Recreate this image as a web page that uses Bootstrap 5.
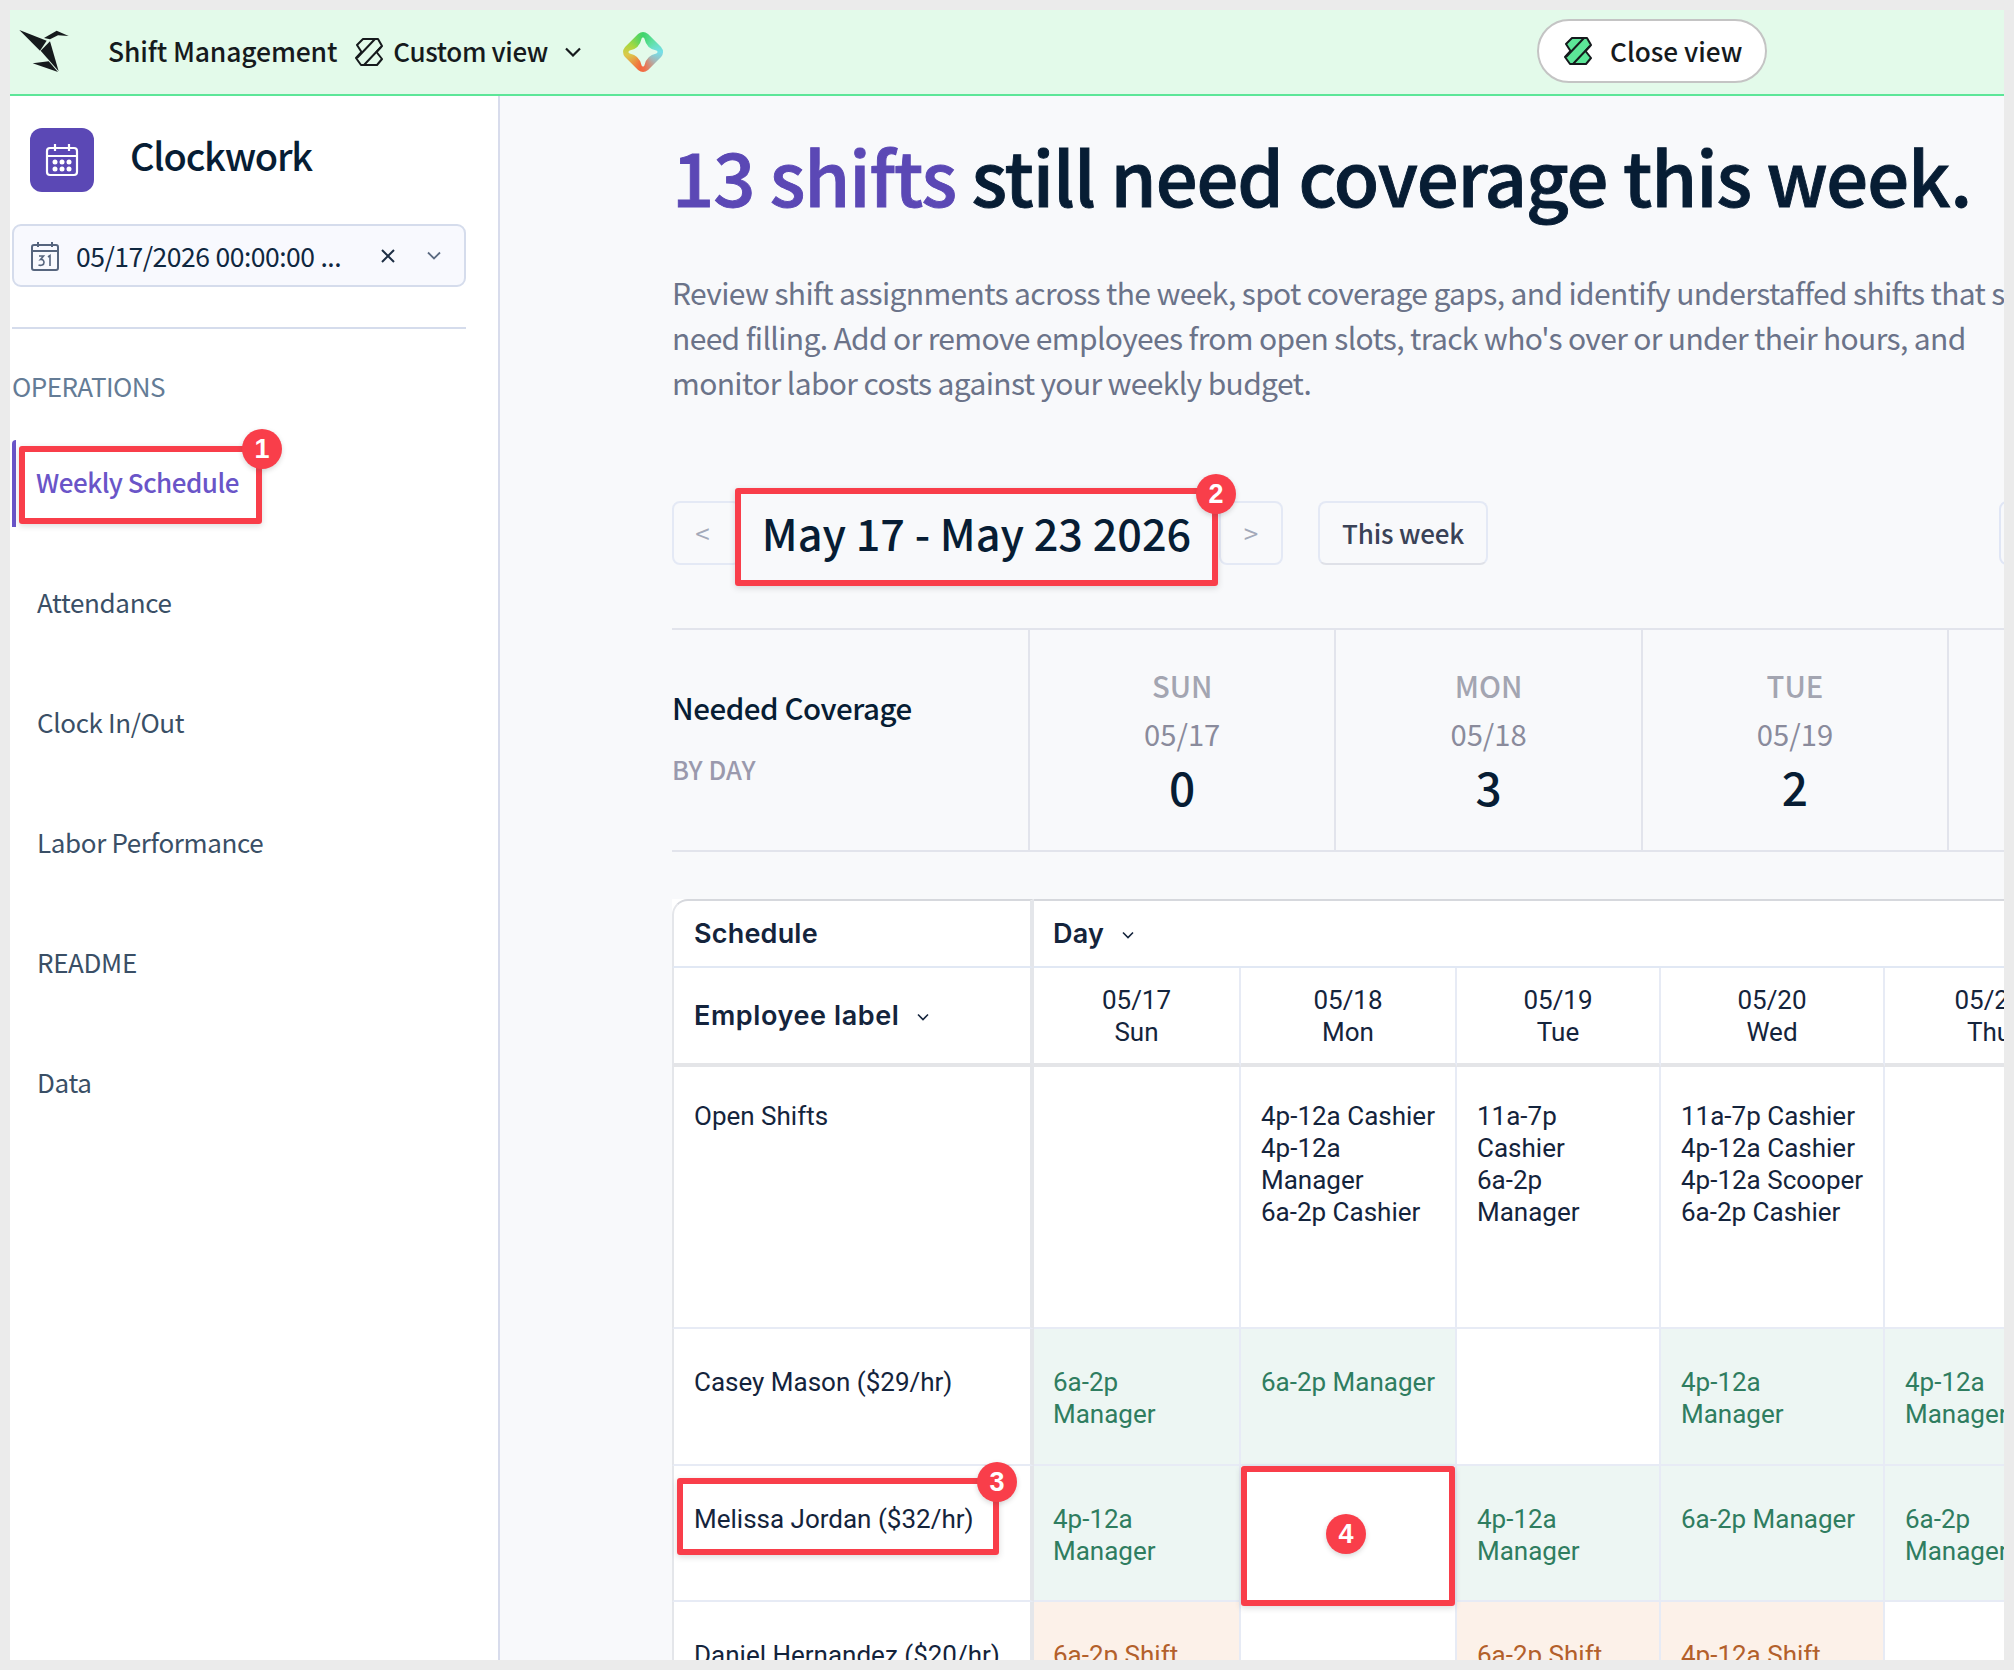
<!DOCTYPE html>
<html lang="en">
<head>
<meta charset="utf-8">
<title>Clockwork</title>
<link rel="stylesheet" href="https://cdn.jsdelivr.net/npm/bootstrap@5.3.0/dist/css/bootstrap.min.css">
<style>
:root{--ss:"Noto Sans CJK SC","Source Sans Pro","Open Sans",sans-serif;--ink:#071d34;--violet:#5b48b5;--red:#f93e4a;}
html,body{margin:0;height:100%;background:#ebebeb;overflow:hidden}
body{font-family:var(--ss);color:var(--ink)}
.frame{position:relative;width:1994px;height:1650px;margin:10px;overflow:hidden;background:#fff;display:flex;flex-direction:column}
.topbar{height:86px;flex:none;background:#e3faea;border-bottom:2px solid #5ce698;display:flex;align-items:center;color:#161a1d;font-size:26.5px;font-weight:500;line-height:36px;position:relative}
.bird{width:64px;height:54px;margin-left:4px;flex:none;margin-top:-2px}
.app-name{margin-left:30px;margin-top:-2px;white-space:nowrap;letter-spacing:-.15px}
.view-ico{width:28px;height:28px;margin-left:18px;flex:none}
.view-lbl{margin-left:10px;margin-top:-2px;white-space:nowrap;font-size:26px;letter-spacing:-.36px}
.view-chev{width:16px;height:10px;margin-left:17px;flex:none}
.spark{width:40px;height:40px;margin-left:42px;flex:none;background:conic-gradient(from 0deg,#3fd46c 0deg,#5fe0a0 40deg,#75dfe8 90deg,#a8b4b4 130deg,#f0704a 175deg,#f4683c 190deg,#dcc94b 260deg,#a5d83f 300deg,#3fd46c 360deg);clip-path:path('M15 2 Q20 -2 25 2 L38 15 Q42 20 38 25 L25 38 Q20 42 15 38 L2 25 Q-2 20 2 15 Z')}
.spark svg{display:block}
.closer{position:absolute;left:1527px;top:9px;width:230px;height:64px;border:2px solid #c4c4c4;border-radius:32px;background:#fff;color:#161a1d;font-size:26.2px;font-weight:500;line-height:36px;padding:0;display:flex;align-items:center;justify-content:flex-start}
.closer svg{width:28px;height:28px;margin-left:25px;margin-right:18px;flex:none}
.closer:hover{background:#fff;border-color:#c4c4c4;color:#161a1d}
.shell{flex:1;display:flex;min-height:0}
.side{width:490px;flex:none;background:#fff;border-right:2px solid #d8dcec;padding:32px 0 0 2px}
.brand{display:flex;align-items:flex-start;margin-left:18px}
.brand-ico{width:64px;height:64px;border-radius:12px;background:var(--violet);display:flex;align-items:center;justify-content:center;flex:none}
.brand-txt{margin-left:36px;margin-top:1px;font-size:38px;letter-spacing:-1.2px;font-weight:500;line-height:52px;color:var(--ink)}
.date-pick{width:454px;height:63px;margin-top:32px;border:2px solid #d5dcec;border-radius:9px;background:#f8f9fe;display:flex;align-items:center;font-size:26.5px;letter-spacing:-.5px;line-height:36px;color:#0f2740}
.date-pick .dp-ico{width:30px;height:30px;margin-left:16px;flex:none}
.dp-txt{margin-left:16px;width:281px;white-space:nowrap;flex:none;word-spacing:.6px}
.dp-x{width:18px;height:18px;margin-left:22px;flex:none}
.dp-c{width:14px;height:9px;margin-left:30px;flex:none}
.side-rule{width:454px;height:2px;margin:40px 0 0;background:#d5dcec;opacity:1;border:0}
.sec-lbl{margin-top:39px;font-size:26px;letter-spacing:-.55px;line-height:36px;color:#647c96}
.side-nav{margin-top:36px;gap:33px}
.side-nav .nav-link{height:87px;padding:0 0 0 25px;display:flex;align-items:center;font-size:26px;letter-spacing:-.35px;line-height:36px;color:#3a4f66;position:relative;width:454px}
.side-nav .nav-link.on{color:#6a55c8;font-weight:500;border-left:4px solid #6a55c8;border-radius:4px 0 0 0;padding-left:20px;padding-bottom:4px;margin-bottom:-2px;letter-spacing:-.5px}
.pane{flex:1;min-width:0;overflow:hidden;background:#f8f9fb;padding-left:172px;position:relative}
.headline{margin:26px 0 0;font-size:74px;letter-spacing:-1.05px;font-weight:500;-webkit-text-stroke:.9px currentColor;line-height:106px;white-space:nowrap;color:var(--ink)}
.headline b{font-weight:500;color:var(--violet)}
.intro{margin:42px 0 0;font-size:30px;letter-spacing:-.64px;line-height:45px;color:#6b7389;white-space:nowrap}
.week-bar{display:flex;align-items:center;margin-top:83px;width:1500px;height:98px}
.step{width:64px;height:64px;border:2px solid #e4e9f5;border-radius:8px;background:transparent;color:#a3a9b9;font-size:26px;line-height:32px;padding:0;flex:none;display:flex;align-items:center;justify-content:center;margin-top:-8px}
.step:hover{background:transparent;color:#a3a9b9;border-color:#e4e9f5}
.step.prev{width:69px}
.week-lbl{position:relative;width:483px;height:98px;margin-left:-6px;flex:none;display:flex;align-items:center;justify-content:center;font-size:43.2px;font-weight:500;line-height:56px;color:var(--ink);background:#f8f9fb;white-space:nowrap;padding-bottom:10px}
.step.next{margin-left:1px}
.today{margin-left:35px;margin-top:-8px;width:170px;height:64px;border:2px solid #e4e9f5;border-bottom-color:#dfe1e8;border-radius:8px;background:transparent;color:#3a4257;font-size:26px;font-weight:500;letter-spacing:-.2px;line-height:34px;padding:0;flex:none}
.today:hover{background:transparent;color:#3a4257;border-color:#e4e9f5}
.blank-btn{margin-left:511px;margin-top:-8px;width:120px;height:64px;border:2px solid #e0e6f5;border-radius:8px;flex:none;background:transparent}
.cover{display:flex;margin-top:42px;height:224px;width:2000px;border-top:2px solid #e2e4ec;border-bottom:2px solid #e2e4ec}
.cov-head{width:356px;flex:none;padding-top:57px}
.cov-t{font-size:29.5px;letter-spacing:-.45px;font-weight:500;line-height:40px;color:var(--ink)}
.cov-s{margin-top:22px;font-size:25.5px;font-weight:500;line-height:40px;color:#9a99ad}
.cov-d{width:306.4px;flex:none;border-left:2px solid #e2e4ec;text-align:center;padding-top:33px}
.cov-w{font-size:29.2px;font-weight:500;line-height:44px;color:#a3a5b1}
.cov-n{font-size:29.2px;line-height:44px;color:#8a8b9c;margin-top:4px}
.cov-v{font-size:46px;font-weight:500;line-height:56px;color:var(--ink);margin-top:3px}
.sched-wrap{margin-top:47px;width:1700px}
.sched{table-layout:fixed;width:1453px;border-collapse:separate;border-spacing:0;margin:0;font-family:Roboto,sans-serif;font-size:26px;line-height:32px;color:#14243c;background:#fff;--bs-table-bg:transparent;--bs-table-border-color:transparent}
.sched>*>tr>*{padding:0 6px 0 20px;border-width:0;border-style:solid;background:#fff;box-shadow:none;vertical-align:top;color:#14243c;font-weight:400;border-right:2px solid #e7ebf5;border-bottom:2px solid #e7ebf5;white-space:nowrap}
.sched>tbody>tr>td:nth-child(2),.sched>thead>tr:first-child>th:nth-child(2){padding-left:19px}
.sched>*>tr>*:first-child{border-left:2px solid #e4e6ea;border-right:4px solid #e4e6ea}
.sched>thead>tr:first-child>*{height:69px;vertical-align:middle;border-top:2px solid #d6d8dd;font-family:Inter,sans-serif;font-weight:600;font-size:27px;letter-spacing:.2px;color:#14243c;border-bottom-color:#e1e8f4}
.sched>thead>tr:first-child>*:first-child{border-top-left-radius:16px}
.sched>thead>tr:nth-child(2)>*{height:99px;vertical-align:middle;text-align:center;padding:0;border-bottom:4px solid #e4e5e8}
.sched>thead>tr:nth-child(2)>*:first-child{text-align:left;padding-left:20px;font-family:Inter,sans-serif;font-weight:600;font-size:27px;letter-spacing:.6px}
.sched td{padding-top:37px!important}
.sched .r-open>*{height:262px;padding-top:33px!important}
.sched .r-a>*{height:137px}
.sched .r-b>*{height:136px}
.sched .r-c>*{height:137px}
.sched .ok{background:#edf6f3!important;color:#2f7d60!important}
.sched .warn{background:#fcf1e9!important;color:#b3602b!important}
.chev-sm{width:12px;height:8px;margin-left:18px;vertical-align:middle}
.mark-box{position:absolute;border:6px solid var(--red);border-radius:3px;box-shadow:0 2px 6px rgba(60,60,60,.18);pointer-events:none;z-index:3}
.mark-dot{position:absolute;width:40px;height:40px;border-radius:50%;background:var(--red);color:#fff;font-family:"Liberation Sans",sans-serif;font-weight:700;font-size:27px;line-height:40px;text-align:center;z-index:4;box-shadow:0 2px 5px rgba(60,60,60,.2);letter-spacing:0}
.cell-rel{position:relative}
</style>
</head>
<body>
<div class="frame">
  <header class="topbar">
    <svg class="bird" viewBox="0 0 192 162" aria-hidden="true"><g fill="#161a1d"><polygon points="16,18 98,50 78,80"/><polygon points="108,52 134,142 80,80"/><polygon points="56,118 104,112 132,144"/><polygon points="90,42 128,20 164,36 132,34 108,46"/></g></svg>
    <span class="app-name">Shift Management</span>
    <svg class="view-ico" viewBox="0 0 28 28" fill="none" stroke="#161a1d" stroke-width="2" stroke-linejoin="round" aria-hidden="true"><path d="M8 1H23L27 8L21.500 14L27 21L22 27H6L1 20L6.500 14L2 7Z"/><path d="M20 1L2 20M26 9L9 27"/></svg>
    <span class="view-lbl">Custom view</span>
    <svg class="view-chev" viewBox="0 0 16 10" fill="none" stroke="#161a1d" stroke-width="2.200" aria-hidden="true"><path d="M1 1.500L8 8.500L15 1.500"/></svg>
    <div class="spark"><svg width="40" height="40" viewBox="0 0 40 40" aria-hidden="true"><path d="M20 7C21.500 14 25 18.500 33 20C25 21.500 21.500 26 20 33C18.500 26 15 21.500 7 20C15 18.500 18.500 14 20 7Z" fill="#e3faea" stroke="#e3faea" stroke-width="3" stroke-linejoin="round"/></svg></div>
    <button type="button" class="btn closer"><svg viewBox="0 0 28 28" stroke="#161a1d" stroke-width="2" stroke-linejoin="round" aria-hidden="true"><path fill="#5ce698" d="M8 1H23L27 8L21.500 14L27 21L22 27H6L1 20L6.500 14L2 7Z"/><path fill="none" d="M20 1L2 20M26 9L9 27"/></svg>Close view</button>
  </header>
  <div class="shell">
    <aside class="side">
      <div class="brand">
        <div class="brand-ico"><svg width="34" height="34" viewBox="0 0 34 34" fill="none" stroke="#fff" stroke-width="2.200" aria-hidden="true"><rect x="2" y="5" width="30" height="27" rx="3"/><path d="M2 13H32M10 1V8M24 1V8"/><g fill="#fff" stroke="none"><circle cx="10" cy="19" r="2.500"/><circle cx="17" cy="19" r="2.500"/><circle cx="24" cy="19" r="2.500"/><circle cx="10" cy="26" r="2.500"/><circle cx="17" cy="26" r="2.500"/><circle cx="24" cy="26" r="2.500"/></g></svg></div>
        <div class="brand-txt">Clockwork</div>
      </div>
      <div class="date-pick">
        <svg class="dp-ico" viewBox="0 0 30 30" fill="none" stroke="#56657e" stroke-width="2" aria-hidden="true"><rect x="2" y="4" width="26" height="25" rx="2"/><path d="M2 10H28M8 1V6M22 1V6"/><path d="M9 15H13.500L10.500 18.500C13 18 14 20 14 21.500C14 24 11 25 8.500 24M18 16L20 14.500V25" stroke-width="1.600"/></svg>
        <span class="dp-txt">05/17/2026 00:00:00 ...</span>
        <svg class="dp-x" viewBox="0 0 18 18" stroke="#1d2e44" stroke-width="2" aria-hidden="true"><path d="M3 3L15 15M15 3L3 15"/></svg>
        <svg class="dp-c" viewBox="0 0 14 9" fill="none" stroke="#5c6b82" stroke-width="1.800" aria-hidden="true"><path d="M1 1.500L7 7.500L13 1.500"/></svg>
      </div>
      <hr class="side-rule">
      <div class="sec-lbl">OPERATIONS</div>
      <nav class="nav flex-column side-nav">
        <a class="nav-link on" href="#">Weekly Schedule<span class="mark-box" style="left:3px;top:6px;width:243px;height:78px"></span><span class="mark-dot" style="left:226px;top:-11px">1</span></a>
        <a class="nav-link" href="#">Attendance</a>
        <a class="nav-link" href="#">Clock In/Out</a>
        <a class="nav-link" href="#">Labor Performance</a>
        <a class="nav-link" href="#">README</a>
        <a class="nav-link" href="#">Data</a>
      </nav>
    </aside>
    <main class="pane">
      <h1 class="headline"><b>13 shifts</b> still need coverage this week.</h1>
      <p class="intro">Review shift assignments across the week, spot coverage gaps, and identify understaffed shifts that still<br>need filling. Add or remove employees from open slots, track who's over or under their hours, and<br>monitor labor costs against your weekly budget.</p>
      <div class="week-bar">
        <button type="button" class="btn step prev"><span class="me-2">&lt;</span></button>
        <div class="week-lbl">May 17 - May 23 2026<span class="mark-box" style="left:0;top:0;width:483px;height:98px"></span><span class="mark-dot" style="left:461px;top:-14px">2</span></div>
        <button type="button" class="btn step next">&gt;</button>
        <button type="button" class="btn today">This week</button>
        <button type="button" class="btn blank-btn" aria-label="More"></button>
      </div>
      <section class="cover">
        <div class="cov-head"><div class="cov-t">Needed Coverage</div><div class="cov-s">BY DAY</div></div>
        <div class="cov-d"><div class="cov-w">SUN</div><div class="cov-n">05/17</div><div class="cov-v">0</div></div>
        <div class="cov-d"><div class="cov-w">MON</div><div class="cov-n">05/18</div><div class="cov-v">3</div></div>
        <div class="cov-d"><div class="cov-w">TUE</div><div class="cov-n">05/19</div><div class="cov-v">2</div></div>
        <div class="cov-d"><div class="cov-w">WED</div><div class="cov-n">05/20</div><div class="cov-v">4</div></div>
      </section>
      <div class="sched-wrap">
        <table class="table sched">
          <colgroup><col style="width:362px"><col style="width:207px"><col style="width:216px"><col style="width:204px"><col style="width:224px"><col style="width:210px"><col style="width:30px"></colgroup>
          <thead>
            <tr><th>Schedule</th><th colspan="6">Day<svg class="chev-sm" viewBox="0 0 12 8" fill="none" stroke="#14243c" stroke-width="1.600"><path d="M1 1.500L6 6.500L11 1.500"/></svg></th></tr>
            <tr><th>Employee label<svg class="chev-sm" viewBox="0 0 12 8" fill="none" stroke="#14243c" stroke-width="1.600"><path d="M1 1.500L6 6.500L11 1.500"/></svg></th><th>05/17<br>Sun</th><th>05/18<br>Mon</th><th>05/19<br>Tue</th><th>05/20<br>Wed</th><th>05/21<br>Thu</th><th></th></tr>
          </thead>
          <tbody>
            <tr class="r-open"><td>Open Shifts</td><td></td><td>4p-12a Cashier<br>4p-12a<br>Manager<br>6a-2p Cashier</td><td>11a-7p<br>Cashier<br>6a-2p<br>Manager</td><td>11a-7p Cashier<br>4p-12a Cashier<br>4p-12a Scooper<br>6a-2p Cashier</td><td></td><td></td></tr>
            <tr class="r-a"><td>Casey Mason ($29/hr)</td><td class="ok">6a-2p<br>Manager</td><td class="ok">6a-2p Manager</td><td></td><td class="ok">4p-12a<br>Manager</td><td class="ok">4p-12a<br>Manager</td><td class="ok"></td></tr>
            <tr class="r-b"><td class="cell-rel">Melissa Jordan ($32/hr)<span class="mark-box" style="left:3px;top:12px;width:322px;height:77px"></span><span class="mark-dot" style="left:303px;top:-4px">3</span></td><td class="ok">4p-12a<br>Manager</td><td class="cell-rel"><span class="mark-box" style="left:0;top:0;width:214px;height:140px"></span><span class="mark-dot" style="left:85px;top:48px">4</span></td><td class="ok">4p-12a<br>Manager</td><td class="ok">6a-2p Manager</td><td class="ok">6a-2p<br>Manager</td><td class="ok"></td></tr>
            <tr class="r-c"><td>Daniel Hernandez ($20/hr)</td><td class="warn">6a-2p Shift</td><td></td><td class="warn">6a-2p Shift</td><td class="warn">4p-12a Shift</td><td></td><td></td></tr>
          </tbody>
        </table>
      </div>
    </main>
  </div>
</div>
<script src="https://cdn.jsdelivr.net/npm/bootstrap@5.3.0/dist/js/bootstrap.bundle.min.js"></script>
</body>
</html>
